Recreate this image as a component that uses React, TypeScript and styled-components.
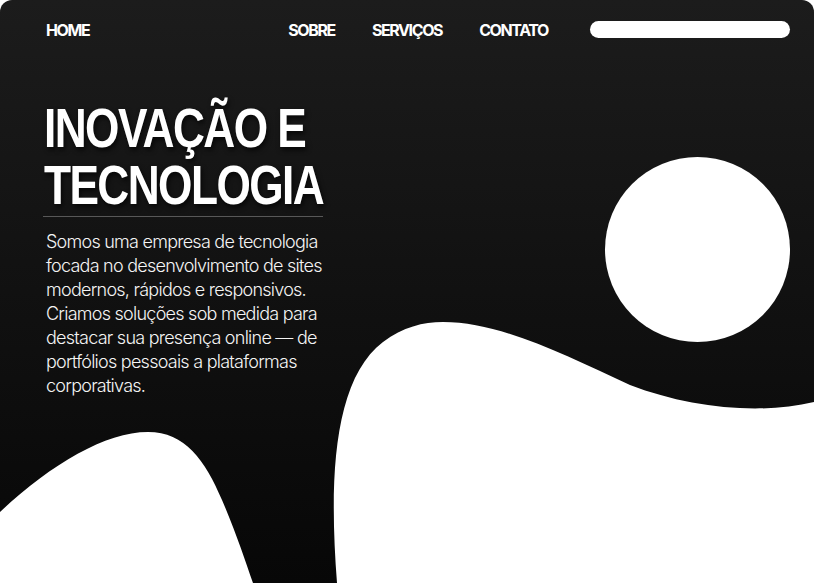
import React from 'react';
import styled, { createGlobalStyle } from 'styled-components';

const GlobalStyle = createGlobalStyle`
  html, body {
    margin: 0;
    padding: 0;
    background: #ffffff;
  }
  * { box-sizing: border-box; }
`;

const Page = styled.div`
  position: relative;
  width: 814px;
  height: 583px;
  overflow: hidden;
  border-radius: 12px 12px 0 0;
  background: linear-gradient(180deg, #1c1c1c 0%, #121212 45%, #070707 100%);
  font-family: Inter, "Noto Sans", sans-serif;
  color: #ffffff;
`;

const Shapes = styled.svg`
  position: absolute;
  inset: 0;
  width: 100%;
  height: 100%;
  z-index: 0;
`;

const Nav = styled.nav`
  position: relative;
  z-index: 1;
  height: 59px;
  display: flex;
  align-items: center;
  justify-content: space-between;
  padding: 0 24px 0 46px;
`;

const NavLink = styled.a`
  font-size: 16px;
  font-weight: 700;
  letter-spacing: -1.4px;
  color: #ffffff;
  text-decoration: none;
  cursor: pointer;
`;

const RightGroup = styled.div`
  display: flex;
  align-items: center;
  gap: 42px;
`;

const Links = styled.div`
  display: flex;
  align-items: center;
  gap: 37px;
`;

const Search = styled.input`
  width: 200px;
  height: 17px;
  border: none;
  border-radius: 9px;
  background: #ffffff;
  outline: none;
  padding: 0 10px;
`;

const Hero = styled.section`
  position: relative;
  z-index: 1;
  padding: 40px 0 0 43px;
`;

const Title = styled.h1`
  width: 280px;
  margin: 0;
  padding: 0 0 3px 1px;
  font-family: "Liberation Sans", Arial, sans-serif;
  font-size: 56px;
  line-height: 57px;
  font-weight: 700;
  letter-spacing: -2px;
  white-space: nowrap;
  text-shadow: 2px 3px 6px rgba(0, 0, 0, 0.7);
  border-bottom: 1px solid #585858;
`;

/* the heading face in the mock is a condensed grotesque */
const TitleLine = styled.span`
  display: block;
  transform: scaleX(0.79);
  transform-origin: left center;
`;

const Text = styled.p`
  width: 285px;
  margin: 13px 0 0 3px;
  font-size: 18px;
  line-height: 24px;
  font-weight: 300;
  letter-spacing: -0.75px;
  color: #f4f4f4;
`;

export default function App() {
  return (
    <>
      <GlobalStyle />
      <Page>
        <Shapes viewBox="0 0 814 583" preserveAspectRatio="none">
          <circle cx="697.5" cy="249.5" r="92.5" fill="#ffffff" />
          <path
            d="M337,583 C329,480 333,380 383,342 C403,327 423,322 443,322 C500,322 565,355 630,385 C690,408 760,415 814,402 L814,583 Z"
            fill="#ffffff"
          />
          <path
            d="M0,512 C50,465 105,432 148,432 C185,432 205,460 222,500 C235,530 245,560 253,583 L0,583 Z"
            fill="#ffffff"
          />
        </Shapes>
        <Nav>
          <NavLink>HOME</NavLink>
          <RightGroup>
            <Links>
              <NavLink>SOBRE</NavLink>
              <NavLink>SERVIÇOS</NavLink>
              <NavLink>CONTATO</NavLink>
            </Links>
            <Search type="text" aria-label="Pesquisar" />
          </RightGroup>
        </Nav>
        <Hero>
          <Title>
            <TitleLine>INOVAÇÃO E</TitleLine>
            <TitleLine>TECNOLOGIA</TitleLine>
          </Title>
          <Text>
            Somos uma empresa de tecnologia focada no desenvolvimento de sites
            modernos, rápidos e responsivos. Criamos soluções sob medida para
            destacar sua presença online — de portfólios pessoais a plataformas
            corporativas.
          </Text>
        </Hero>
      </Page>
    </>
  );
}
